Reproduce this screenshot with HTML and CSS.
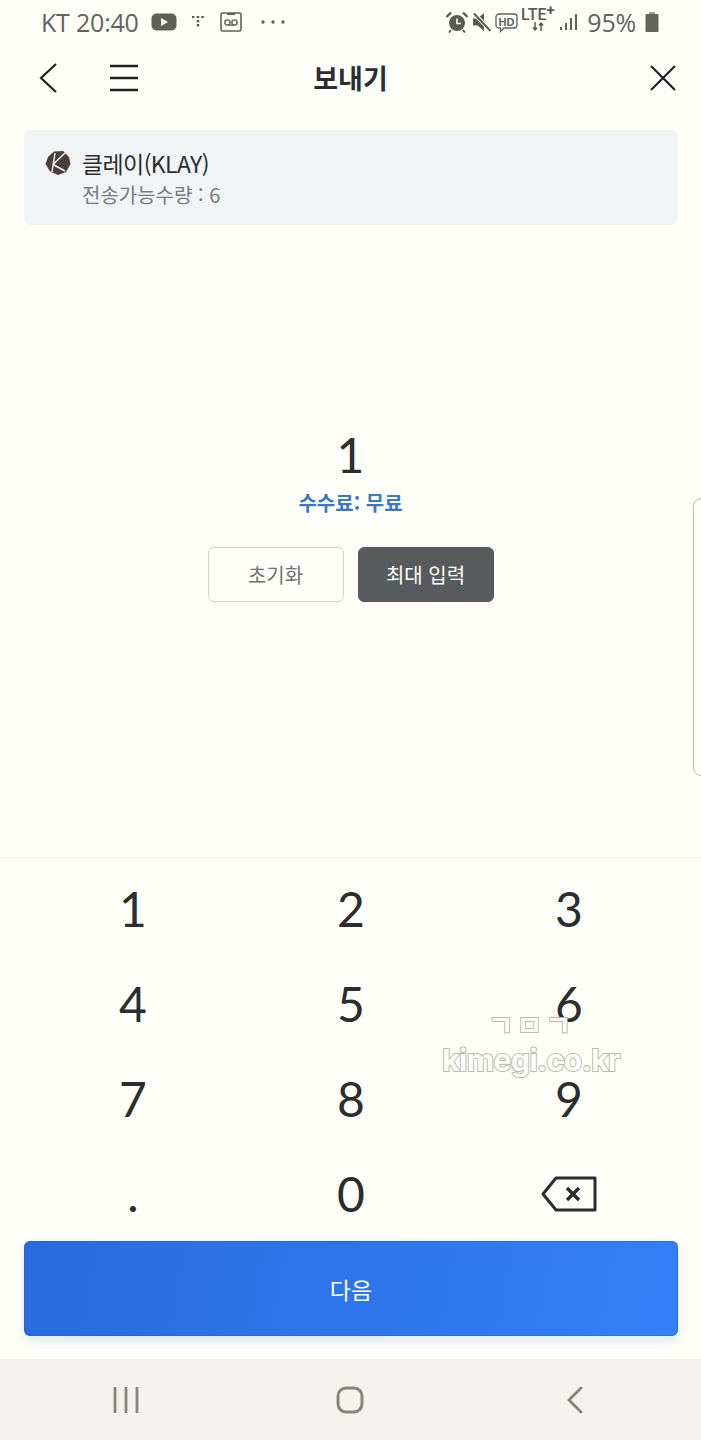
FILE: index.html
```html
<!DOCTYPE html>
<html lang="ko">
<head>
<meta charset="utf-8">
<title>보내기</title>
<link rel="stylesheet" href="styles.css">
</head>
<body>
<div class="screen">
  <div class="statusbar">
    <div class="status-left">
      <span class="status-text">KT 20:40</span>
      <svg class="ic-yt" width="26" height="18" viewBox="0 0 26 18"><rect x="0.5" y="0.5" width="25" height="17" rx="5" fill="#5f5f5c"/><path d="M10 5l7 4-7 4z" fill="#fffffa"/></svg>
      <svg class="ic-dots" width="12" height="14" viewBox="0 0 12 14"><g fill="#555"><rect x="0" y="1" width="2.4" height="2"/><rect x="4.6" y="1" width="2.6" height="2"/><rect x="9.4" y="1" width="2.4" height="2"/><rect x="4.8" y="5" width="2.4" height="2.4"/><rect x="4.8" y="9" width="2.4" height="2.4"/></g></svg>
      <svg class="ic-vm" width="22" height="20" viewBox="0 0 22 20"><rect x="1" y="1" width="20" height="18" rx="1.5" fill="none" stroke="#5f5f5c" stroke-width="1.6"/><rect x="7" y="1" width="8" height="2" fill="#5f5f5c"/><circle cx="7.5" cy="10.5" r="2.6" fill="none" stroke="#5f5f5c" stroke-width="1.4"/><circle cx="14.5" cy="10.5" r="2.6" fill="none" stroke="#5f5f5c" stroke-width="1.4"/><path d="M7.5 13.1h7" stroke="#5f5f5c" stroke-width="1.4"/></svg>
      <svg class="ic-more" width="24" height="4" viewBox="0 0 24 4"><g fill="#5f5f5c"><circle cx="2" cy="2" r="1.7"/><circle cx="12" cy="2" r="1.7"/><circle cx="22" cy="2" r="1.7"/></g></svg>
    </div>
    <div class="status-right">
      <svg width="24" height="22" viewBox="0 0 24 22"><circle cx="12" cy="12" r="8" fill="#5a5a57"/><path d="M12 7.5V12.5H16" fill="none" stroke="#fffffa" stroke-width="1.6"/><path d="M1.5 6L6 1.5M22.5 6L18 1.5" stroke="#5a5a57" stroke-width="2.4"/><path d="M6 19l-2 2.5M18 19l2 2.5" stroke="#5a5a57" stroke-width="2"/></svg>
      <svg width="20" height="22" viewBox="0 0 20 22"><path d="M1 7.5h4.5L12 2v18l-6.500-5.500H1z" fill="#5a5a57"/><path d="M1.500 2L19 20" stroke="#fffffa" stroke-width="4"/><path d="M2 2.500L18.500 20" stroke="#5a5a57" stroke-width="2"/></svg>
      <svg class="ic-hd" width="23" height="21" viewBox="0 0 23 21"><path d="M4 2h15a3 3 0 0 1 3 3v8a3 3 0 0 1-3 3H9l-3.500 3.500V16H4a3 3 0 0 1-3-3V5a3 3 0 0 1 3-3z" fill="none" stroke="#5f5f5c" stroke-width="1.3"/><text x="11.500" y="13.500" text-anchor="middle" class="hd-label">HD</text></svg>
      <div class="lte">
        <span class="lte-label">LTE<sup class="lte-plus">+</sup></span>
        <svg width="12" height="9" viewBox="0 0 12 9"><path d="M3 0v8M1 5.500L3 8l2-2.500M9 9V1M7 3.500L9 1l2 2.500" fill="none" stroke="#5a5a57" stroke-width="1.5"/></svg>
      </div>
      <svg class="ic-signal" width="18" height="18" viewBox="0 0 18 18"><g fill="#5f5f5c"><rect x="0" y="14" width="2" height="3"/><rect x="5" y="10" width="2" height="7"/><rect x="10" y="5" width="2" height="12"/><rect x="15" y="1" width="2" height="16"/></g></svg>
      <span class="status-text battery-pct">95%</span>
      <svg width="14" height="21" viewBox="0 0 14 21"><rect x="4" y="0" width="6" height="3" fill="#9a9a96"/><rect x="0.500" y="2" width="13" height="18" rx="1" fill="#63635f"/></svg>
    </div>
  </div>

  <header class="topbar">
    <div class="topbar-left">
      <svg width="20" height="32" viewBox="0 0 20 32"><path d="M18 2L3 16l15 14" fill="none" stroke="#1f2023" stroke-width="2.200"/></svg>
      <svg width="30" height="30" viewBox="0 0 30 30"><path d="M1 3h28M1 15h28M1 27h28" fill="none" stroke="#1f2023" stroke-width="2.400"/></svg>
    </div>
    <h1 class="title">보내기</h1>
    <svg class="close" width="28" height="28" viewBox="0 0 28 28"><path d="M2 2l24 24M26 2L2 26" fill="none" stroke="#1f2023" stroke-width="2.200"/></svg>
  </header>

  <section class="asset">
    <div class="asset-name">
      <svg width="26" height="26" viewBox="0 0 26 26"><path d="M9 1.500L18 1l6 6 1.500 7-4.500 8-8 3-8-3.500L.5 14 3 7z" fill="#4a4039"/><path d="M10 3L7 22M20 3L8 14.500l12 6.500" fill="none" stroke="#f2f5f6" stroke-width="1.500"/></svg>
      <span>클레이(KLAY)</span>
    </div>
    <div class="asset-balance">전송가능수량 : 6</div>
  </section>

  <main class="amount">
    <div class="amount-value">1</div>
    <div class="fee">수수료: 무료</div>
    <div class="amount-actions">
      <button class="btn btn-reset">초기화</button>
      <button class="btn btn-max">최대 입력</button>
    </div>
  </main>

  <section class="keypad">
    <div class="key">1</div><div class="key">2</div><div class="key">3</div>
    <div class="key">4</div><div class="key">5</div><div class="key">6</div>
    <div class="key">7</div><div class="key">8</div><div class="key">9</div>
    <div class="key key-dot">.</div><div class="key">0</div>
    <div class="key">
      <svg width="56" height="36" viewBox="0 0 56 36"><path d="M15 2h39v32H15L2 18z" fill="none" stroke="#2b2d30" stroke-width="3" stroke-linejoin="round"/><path d="M26 12l12 12M38 12L26 24" fill="none" stroke="#2b2d30" stroke-width="3.400"/></svg>
    </div>
  </section>

  <div class="footer">
    <button class="next">다음</button>
  </div>

  <nav class="navbar">
    <svg width="26" height="26" viewBox="0 0 26 26"><path d="M2 1v24M13 1v24M24 1v24" fill="none" stroke="#858580" stroke-width="2.800" stroke-linecap="round"/></svg>
    <svg width="28" height="28" viewBox="0 0 28 28"><rect x="2" y="2" width="24" height="24" rx="8" fill="none" stroke="#858580" stroke-width="3"/></svg>
    <svg width="16" height="28" viewBox="0 0 16 28"><path d="M14 2L2 14l12 12" fill="none" stroke="#858580" stroke-width="2.800" stroke-linecap="round"/></svg>
  </nav>

  <div class="edge-handle"></div>
  <div class="watermark">
    <div class="wm-top">ㄱㅁㄱ</div>
    <div class="wm-site">kimegi.co.kr</div>
  </div>
</div>
</body>
</html>
```
FILE: styles.css
```css
* { box-sizing: border-box; }
html, body { margin: 0; padding: 0; }
body { font-family: "Noto Sans CJK KR", "Noto Sans", sans-serif; background: #fffffa; }

.screen {
  position: relative;
  width: 701px;
  height: 1440px;
  overflow: hidden;
  display: flex;
  flex-direction: column;
  background: #fffffa;
  color: #2b2d30;
}

/* status bar */
.statusbar {
  height: 44px;
  padding: 0 42px 0 41px;
  display: flex;
  justify-content: space-between;
  align-items: center;
}
.status-left, .status-right { display: flex; align-items: center; }
.status-text {
  font-family: "Open Sans", sans-serif;
  font-size: 25px;
  line-height: 44px;
  color: #63635f;
  letter-spacing: -0.2px;
}
.ic-yt { margin-left: 12px; }
.ic-dots { margin-left: 15px; }
.ic-vm { margin-left: 16px; }
.ic-more { margin-left: 19px; }
.status-right { gap: 3px; }
.hd-label { font: 700 11px "Liberation Sans", sans-serif; fill: #5f5f5c; }
.lte { display: flex; flex-direction: column; align-items: center; width: 33px; margin-top: -6px; }
.lte-label { font: 500 16px/15px "Roboto", sans-serif; color: #5a5a57; }
.lte-plus { font-size: 15px; line-height: 0; vertical-align: 5px; font-weight: 700; }
.ic-signal { margin-left: 3px; }
.battery-pct { margin: 0 6px 0 6px; }

/* top bar */
.topbar {
  position: relative;
  height: 64px;
  margin-top: 2px;
  padding: 0 24px 0 38px;
  display: flex;
  justify-content: space-between;
  align-items: center;
}
.topbar-left { display: flex; align-items: center; gap: 51px; }
.title {
  position: absolute;
  left: 0;
  right: 0;
  margin: 0;
  text-align: center;
  font-size: 27px;
  font-weight: 700;
  line-height: 40px;
  color: #2b2d30;
  pointer-events: none;
}

/* asset summary */
.asset {
  margin: 20px 23px 0 24px;
  height: 95px;
  padding: 16px 20px 0 21px;
  background: #f1f4f5;
  border-radius: 7px;
}
.asset-name {
  display: flex;
  align-items: center;
  gap: 11px;
  font-size: 23px;
  line-height: 34px;
  letter-spacing: -0.6px;
  color: #2b2d30;
}
.asset-balance {
  margin-left: 37px;
  font-size: 20px;
  line-height: 30px;
  color: #777a7c;
}

/* amount entry */
.amount {
  height: 633px;
  display: flex;
  flex-direction: column;
  align-items: center;
  border-bottom: 1px solid #eeeeea;
  padding-top: 198px;
}
.amount-value {
  font-family: "Lato", sans-serif;
  font-size: 48px;
  line-height: 64px;
  color: #2b2d30;
}
.fee {
  margin-top: 1px;
  font-size: 20px;
  font-weight: 700;
  line-height: 30px;
  color: #3a78c8;
}
.amount-actions { display: flex; gap: 14px; margin-top: 29px; }
.btn {
  width: 136px;
  height: 55px;
  padding: 0;
  border-radius: 6px;
  font-family: inherit;
  font-size: 20px;
}
.btn-reset { background: #fffffa; border: 1px solid #d2d4d2; color: #6f7172; }
.btn-max { background: #575b5d; border: 1px solid #575b5d; color: #fffffa; }

/* number pad */
.keypad {
  padding-top: 3px;
  display: grid;
  grid-template-columns: repeat(3, 1fr);
  padding-left: 24px;
  padding-right: 23px;
  grid-auto-rows: 95px;
}
.key {
  display: flex;
  align-items: center;
  justify-content: center;
  font-family: "Lato", sans-serif;
  font-size: 48px;
  color: #2b2d30;
}

/* next button */
.footer { padding: 0 23px 0 24px; margin-top: 0; height: 118px; flex: none; }
.next {
  display: block;
  width: 100%;
  height: 95px;
  border: 0;
  border-radius: 6px;
  background: linear-gradient(100deg, #286bdf, #347ff7);
  box-shadow: 0 0 0 1px rgba(40, 90, 180, 0.35) inset, 0 5px 12px rgba(60, 110, 200, 0.16);
  color: #fffffa;
  font-family: inherit;
  font-size: 23px;
}

/* system navigation */
.navbar {
  flex: 1;
  background: #f3f2ee;
  display: grid;
  grid-template-columns: 1fr 1fr 1fr;
  justify-items: center;
  align-items: center;
  padding: 0 14px;
}

/* panel edge peeking in from the right */
.edge-handle {
  position: absolute;
  top: 498px;
  right: -12px;
  width: 20px;
  height: 278px;
  border: 1px solid #bcbcb8;
  border-radius: 8px;
}

/* site mark laid over the keypad */
.watermark {
  position: absolute;
  left: 442px;
  top: 1006px;
  width: 178px;
  text-align: center;
  color: #fffffa;
  -webkit-text-stroke: 2px #b8b8b4;
  paint-order: stroke fill;
  font-family: "Inter", sans-serif;
  font-weight: 700;
}
.wm-top {
  font-family: "Noto Sans CJK KR", sans-serif;
  font-size: 28px;
  line-height: 36px;
  letter-spacing: 3px;
}
.wm-site { font-size: 30px; line-height: 38px; letter-spacing: -0.5px; margin-top: -1px; white-space: nowrap; }
```
